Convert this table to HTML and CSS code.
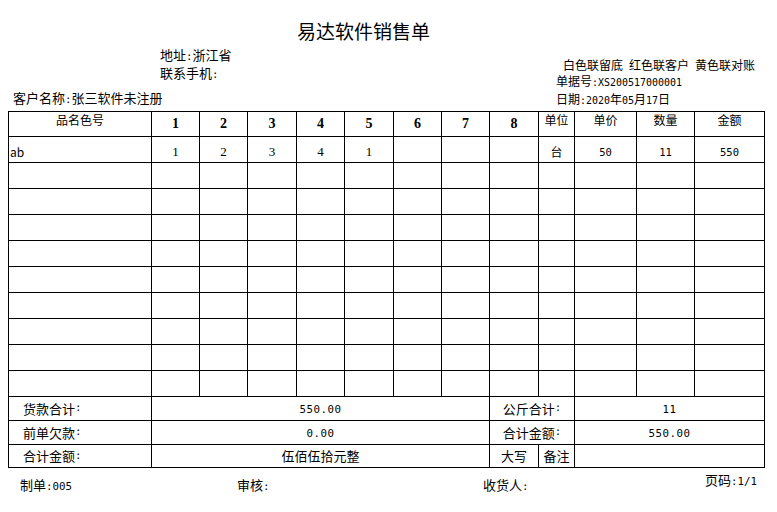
FILE: index.html
```html
<!DOCTYPE html>
<html lang="zh-CN">
<head>
<meta charset="utf-8">
<title>易达软件销售单</title>
<link rel="stylesheet" href="styles.css">
</head>
<body>
<h1 class="title">易达软件销售单</h1>
<div class="meta">
  <div class="addr">
    <div>地址<span class="a">:</span>浙江省</div>
    <div>联系手机<span class="a">:</span></div>
  </div>
  <div class="side">
    <div class="copies">白色联留底<span class="a"> </span>红色联客户<span class="a"> </span>黄色联对账</div>
    <div>单据号<span class="a">:XS200517000001</span></div>
  </div>
</div>
<div class="cust">
  <div class="cname">客户名称<span class="a">:</span>张三软件未注册</div>
  <div class="side">日期<span class="a">:2020</span>年<span class="a">05</span>月<span class="a">17</span>日</div>
</div>

<div class="sheet">
  <div class="c h">品名色号</div>
  <div class="c b">1</div><div class="c b">2</div><div class="c b">3</div><div class="c b">4</div>
  <div class="c b">5</div><div class="c b">6</div><div class="c b">7</div><div class="c b">8</div>
  <div class="c h">单位</div><div class="c h">单价</div><div class="c h">数量</div><div class="c h">金额</div>

  <div class="c d l">ab</div>
  <div class="c d s">1</div><div class="c d s">2</div><div class="c d s">3</div><div class="c d s">4</div>
  <div class="c d s">1</div><div class="c d"></div><div class="c d"></div><div class="c d"></div>
  <div class="c d">台</div><div class="c d a">50</div><div class="c d a">11</div><div class="c d a">550</div>

  <div class="c"></div><div class="c"></div><div class="c"></div><div class="c"></div><div class="c"></div><div class="c"></div><div class="c"></div><div class="c"></div><div class="c"></div><div class="c"></div><div class="c"></div><div class="c"></div><div class="c"></div>
  <div class="c"></div><div class="c"></div><div class="c"></div><div class="c"></div><div class="c"></div><div class="c"></div><div class="c"></div><div class="c"></div><div class="c"></div><div class="c"></div><div class="c"></div><div class="c"></div><div class="c"></div>
  <div class="c"></div><div class="c"></div><div class="c"></div><div class="c"></div><div class="c"></div><div class="c"></div><div class="c"></div><div class="c"></div><div class="c"></div><div class="c"></div><div class="c"></div><div class="c"></div><div class="c"></div>
  <div class="c"></div><div class="c"></div><div class="c"></div><div class="c"></div><div class="c"></div><div class="c"></div><div class="c"></div><div class="c"></div><div class="c"></div><div class="c"></div><div class="c"></div><div class="c"></div><div class="c"></div>
  <div class="c"></div><div class="c"></div><div class="c"></div><div class="c"></div><div class="c"></div><div class="c"></div><div class="c"></div><div class="c"></div><div class="c"></div><div class="c"></div><div class="c"></div><div class="c"></div><div class="c"></div>
  <div class="c"></div><div class="c"></div><div class="c"></div><div class="c"></div><div class="c"></div><div class="c"></div><div class="c"></div><div class="c"></div><div class="c"></div><div class="c"></div><div class="c"></div><div class="c"></div><div class="c"></div>
  <div class="c"></div><div class="c"></div><div class="c"></div><div class="c"></div><div class="c"></div><div class="c"></div><div class="c"></div><div class="c"></div><div class="c"></div><div class="c"></div><div class="c"></div><div class="c"></div><div class="c"></div>
  <div class="c"></div><div class="c"></div><div class="c"></div><div class="c"></div><div class="c"></div><div class="c"></div><div class="c"></div><div class="c"></div><div class="c"></div><div class="c"></div><div class="c"></div><div class="c"></div><div class="c"></div>
  <div class="c"></div><div class="c"></div><div class="c"></div><div class="c"></div><div class="c"></div><div class="c"></div><div class="c"></div><div class="c"></div><div class="c"></div><div class="c"></div><div class="c"></div><div class="c"></div><div class="c"></div>

  <div class="c lab">货款合计<span class="a">:</span></div>
  <div class="c sum span7"><span class="a n">550.00</span></div>
  <div class="c sum span2">公斤合计<span class="a">:</span></div>
  <div class="c sum span3"><span class="a n">11</span></div>

  <div class="c lab">前单欠款<span class="a">:</span></div>
  <div class="c sum span7"><span class="a n">0.00</span></div>
  <div class="c sum span2">合计金额<span class="a">:</span></div>
  <div class="c sum span3"><span class="a n">550.00</span></div>

  <div class="c lab">合计金额<span class="a">:</span></div>
  <div class="c sum span7">伍佰伍拾元整</div>
  <div class="c sum">大写</div>
  <div class="c sum">备注</div>
  <div class="c sum span3"></div>
</div>

<div class="foot">
  <div class="fi">制单<span class="a">:005</span></div>
  <div class="fi">审核<span class="a">:</span></div>
  <div class="fi">收货人<span class="a">:</span></div>
  <div class="fp">页码<span class="a">:1/1</span></div>
</div>
</body>
</html>
```

FILE: styles.css
```css
html, body {
  margin: 0;
  padding: 0;
  background: #fff;
}
body {
  font-family: "Noto Sans CJK SC", "Noto Sans", sans-serif;
  font-size: 13px;
  color: #000;
  width: 777px;
}
.a {
  font-family: "DejaVu Sans Mono", "Liberation Mono", monospace;
  font-size: 0.83em;
  line-height: 1;
}
.title {
  margin: 0;
  padding: 21px 0 0 297px;
  height: 20px;
  font-size: 19px;
  line-height: 20px;
  font-weight: normal;
}
.meta {
  display: flex;
  height: 43px;
  margin-top: 5px;
}
.addr {
  flex: 1;
  padding-left: 160px;
  line-height: 18px;
}
.addr > div {
  height: 18px;
}
.side {
  width: 221px;
  flex-shrink: 0;
  font-size: 12px;
  line-height: 16px;
}
.meta .side {
  padding-top: 11px;
}
.meta .side > div {
  height: 16px;
}
.copies {
  padding-left: 7px;
  white-space: pre;
}
.cust {
  display: flex;
  height: 20px;
  line-height: 18px;
}
.cust .side {
  line-height: 20px;
}
.cname {
  flex: 1;
  padding-left: 13px;
}
.sheet {
  display: grid;
  width: max-content;
  margin: 2px 0 0 8px;
  border-left: 1px solid #000;
  border-top: 1px solid #000;
  grid-template-columns: 143px 48px 48px 49px 48px 49px 48px 48px 49px 36px 62px 58px 70px;
  grid-template-rows: 25px repeat(10, 26px) 24px 24px 23px;
}
.c {
  box-sizing: border-box;
  border-right: 1px solid #000;
  border-bottom: 1px solid #000;
  display: flex;
  align-items: center;
  justify-content: center;
  font-size: 12px;
  line-height: 14px;
  white-space: nowrap;
}
.c .a {
  vertical-align: -1px;
}
.h {
  align-items: flex-start;
  padding-top: 2px;
  line-height: 12px;
}
.b {
  font-family: "Liberation Serif", "DejaVu Serif", serif;
  font-weight: bold;
  font-size: 14px;
}
.d {
  padding-top: 4px;
}
.d.a {
  font-size: 10.5px;
}
.s {
  font-family: "Liberation Serif", "DejaVu Serif", serif;
  font-size: 13px;
}
.l {
  justify-content: flex-start;
  padding-left: 1px;
}
.lab {
  justify-content: flex-start;
  padding-left: 14px;
  font-size: 13px;
}
.sum {
  font-size: 13px;
}
.n {
  letter-spacing: 0.5px;
  position: relative;
  top: 2px;
}
.span7 { grid-column: span 7; }
.span3 { grid-column: span 3; }
.span2 { grid-column: span 2; }
.foot {
  display: grid;
  grid-template-columns: 217px 246px 222px auto;
  align-items: start;
  padding-left: 20px;
  margin-top: 4px;
  line-height: 16px;
}
.fi {
  padding-top: 5px;
}
```
